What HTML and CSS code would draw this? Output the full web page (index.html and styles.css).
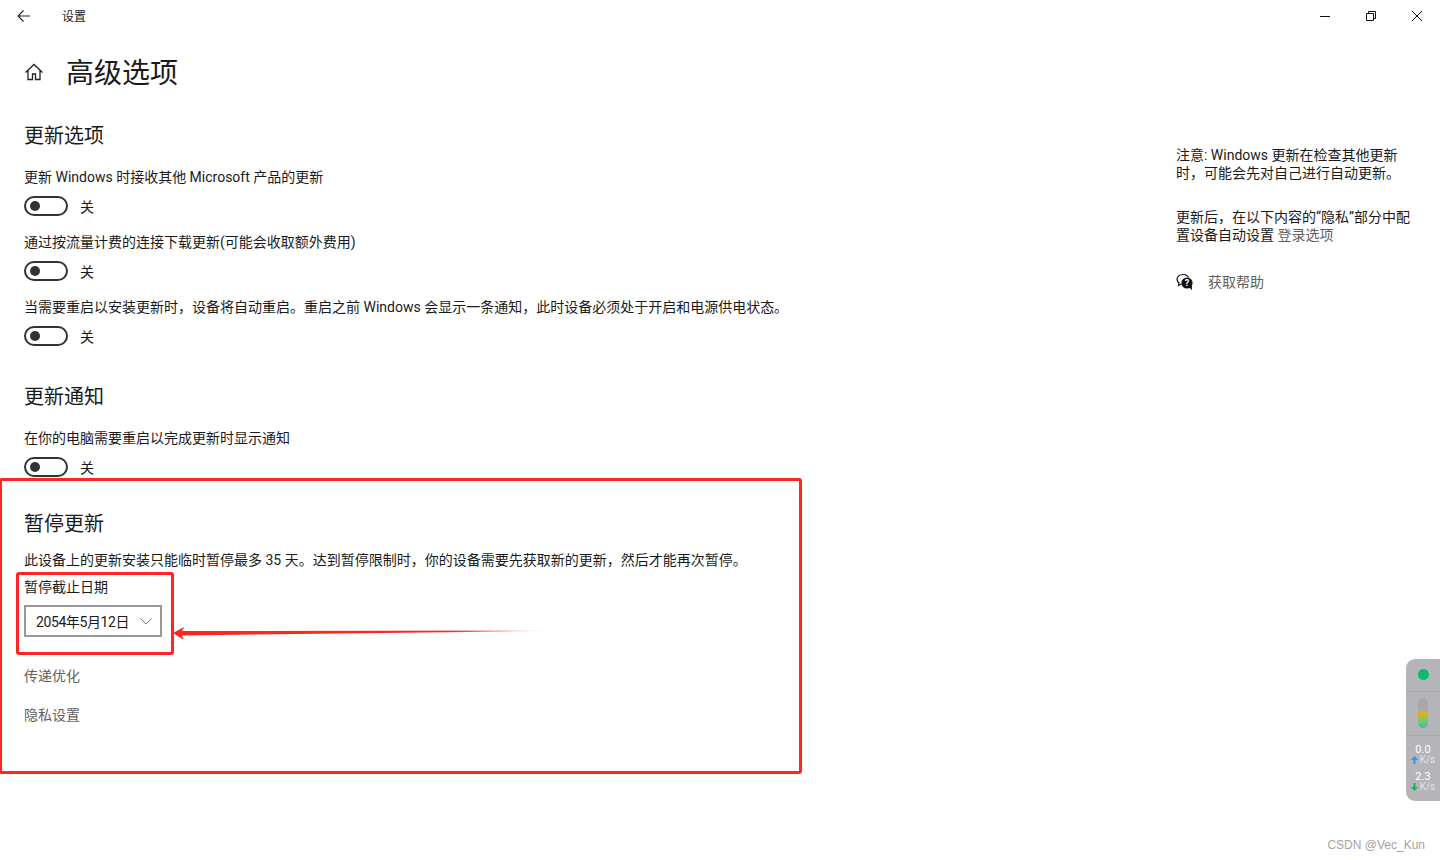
FILE: index.html
```html
<!DOCTYPE html>
<html lang="zh-CN">
<head>
    <meta charset="UTF-8">
    <meta name="viewport" content="width=device-width, initial-scale=1.0">
    <title>设置 - 高级选项</title>
    <link rel="stylesheet" href="styles.css">
</head>
<body>
    <!-- Title bar -->
    <header class="titlebar">
        <div class="titlebar-left">
            <svg class="back-icon" width="16" height="16" viewBox="0 0 16 16"><path d="M14 8H2.500M7.500 2.500 2 8l5.500 5.500" fill="none" stroke="#222" stroke-width="1.100"/></svg>
            <span class="titlebar-text">设置</span>
        </div>
        <div class="window-controls">
            <div class="window-btn"><svg width="12" height="12" viewBox="0 0 12 12"><path d="M1 6.500h10" stroke="#111" stroke-width="1"/></svg></div>
            <div class="window-btn"><svg width="12" height="12" viewBox="0 0 12 12"><path d="M1.500 3.500h7v7h-7zM3.500 3.500v-2h7v7h-2" fill="none" stroke="#111" stroke-width="1"/></svg></div>
            <div class="window-btn"><svg width="12" height="12" viewBox="0 0 12 12"><path d="M1 1l10 10M11 1 1 11" stroke="#111" stroke-width="1"/></svg></div>
        </div>
    </header>

    <div class="page">
        <main class="main-content">
            <div class="page-title">
                <svg width="20" height="20" viewBox="0 0 20 20"><path d="M1.500 10.500 10 2.500l8.500 8M4 8.500V17.500h4.500v-5.500h3v5.500H16V8.500" fill="none" stroke="#222" stroke-width="1.300"/></svg>
                <h1>高级选项</h1>
            </div>

            <!-- Update options -->
            <section class="options-section">
                <h2>更新选项</h2>
                <div class="option">
                    <p>更新 Windows 时接收其他 Microsoft 产品的更新</p>
                    <div class="toggle-row"><span class="toggle"></span><span>关</span></div>
                </div>
                <div class="option">
                    <p>通过按流量计费的连接下载更新(可能会收取额外费用)</p>
                    <div class="toggle-row"><span class="toggle"></span><span>关</span></div>
                </div>
                <div class="option">
                    <p>当需要重启以安装更新时，设备将自动重启。重启之前 Windows 会显示一条通知，此时设备必须处于开启和电源供电状态。</p>
                    <div class="toggle-row"><span class="toggle"></span><span>关</span></div>
                </div>
            </section>

            <!-- Update notifications -->
            <section class="options-section notify-section">
                <h2>更新通知</h2>
                <div class="option">
                    <p>在你的电脑需要重启以完成更新时显示通知</p>
                    <div class="toggle-row"><span class="toggle"></span><span>关</span></div>
                </div>
            </section>

            <!-- Pause updates -->
            <section class="options-section pause-section">
                <h2>暂停更新</h2>
                <p class="pause-desc">此设备上的更新安装只能临时暂停最多 35 天。达到暂停限制时，你的设备需要先获取新的更新，然后才能再次暂停。</p>
                <p class="date-label">暂停截止日期</p>
                <div class="date-select">
                    <span class="date-value">2054年5月12日</span>
                    <svg width="12" height="7" viewBox="0 0 12 7"><path d="M.5.5 6 6 11.500.5" fill="none" stroke="#777" stroke-width="1"/></svg>
                </div>
                <a class="plain-link first-link" href="#delivery">传递优化</a>
                <a class="plain-link" href="#privacy">隐私设置</a>
            </section>
        </main>

        <aside class="side-notes">
            <p>注意: Windows 更新在检查其他更新<br>时，可能会先对自己进行自动更新。</p>
            <p class="note-second">更新后，在以下内容的“隐私”部分中配<br>置设备自动设置 <a href="#login">登录选项</a></p>
            <div class="help-row">
                <svg width="18" height="18" viewBox="0 0 18 18">
                    <path d="M7 1.500C3.500 1.500 1 3.600 1 6.300c0 1.500.8 2.800 2 3.700L2.500 12.500 5.500 11" fill="none" stroke="#111" stroke-width="1.200"/>
                    <path d="M7 1.500c2.700 0 4.800 1.200 5.600 3" fill="none" stroke="#111" stroke-width="1.200"/>
                    <circle cx="11" cy="10" r="5.600" fill="#111"/>
                    <path d="M13 14l3 3.200-.2-5z" fill="#111"/>
                    <text class="help-mark" x="11" y="13">?</text>
                </svg>
                <span>获取帮助</span>
            </div>
        </aside>
    </div>

    <!-- Red annotations drawn over the screenshot -->
    <div class="mark mark-outer"></div>
    <div class="mark mark-inner"></div>
    <svg class="mark-arrow" width="372" height="14" viewBox="0 0 372 14">
        <defs>
            <linearGradient id="fade" x1="0" x2="1" y1="0" y2="0">
                <stop offset="0" stop-color="#fe2620"/>
                <stop offset="0.75" stop-color="#fe2620"/>
                <stop offset="1" stop-color="#fe2620" stop-opacity="0"/>
            </linearGradient>
        </defs>
        <path d="M0 8 11 2 9 6 372 5.500V6L9 10.500l2 4.500z" fill="url(#fade)"/>
    </svg>

    <!-- Network speed widget -->
    <div class="net-widget">
        <span class="net-dot"></span>
        <span class="net-line"></span>
        <span class="net-bar"><span class="net-bar-fill"></span></span>
        <span class="net-line"></span>
        <div class="net-speed">0.0</div>
        <div class="net-unit"><svg width="7" height="8" viewBox="0 0 7 8"><path d="M3.500 0 7 4H4.500v4h-2V4H0z" fill="#1e9bff"/></svg>K/s</div>
        <div class="net-speed net-speed-down">2.3</div>
        <div class="net-unit"><svg width="7" height="8" viewBox="0 0 7 8"><path d="M3.500 8 7 4H4.500V0h-2v4H0z" fill="#10b85a"/></svg>K/s</div>
    </div>

    <div class="watermark">CSDN @Vec_Kun</div>
</body>
</html>
```

FILE: styles.css
```css
* {
    margin: 0;
    padding: 0;
    box-sizing: border-box;
    font-family: Roboto, 'Noto Sans CJK SC', sans-serif;
}

:root {
    --text: #1a1a1a;
    --muted: #5f5f5f;
    --red: #fe2620;
}

html, body {
    height: 860px;
    overflow: hidden;
}

body {
    background-color: #ffffff;
    color: var(--text);
    font-size: 14px;
    position: relative;
}

/* Title bar */
.titlebar {
    display: flex;
    justify-content: space-between;
    height: 32px;
}

.titlebar-left {
    display: flex;
    align-items: center;
    padding-left: 16px;
}

.back-icon {
    margin-right: 30px;
}

.titlebar-text {
    font-size: 12px;
    margin-bottom: 2px;
}

.window-controls {
    display: flex;
}

.window-btn {
    width: 46px;
    height: 32px;
    display: flex;
    align-items: center;
    justify-content: center;
}

/* Layout */
.page {
    display: flex;
    justify-content: space-between;
}

.main-content {
    width: 820px;
    padding-left: 24px;
}

.page-title {
    display: flex;
    align-items: center;
    gap: 22px;
    height: 60px;
    margin-top: 10px;
}

.page-title h1 {
    font-size: 28px;
    font-weight: 400;
    line-height: 40px;
    margin-top: 4px;
}

/* Sections */
.options-section {
    margin-top: 20px;
}

.options-section h2 {
    font-size: 20px;
    font-weight: 400;
    line-height: 28px;
}

.option {
    margin-top: 16px;
}

.options-section h2 + .option {
    margin-top: 17px;
}

.option p,
.pause-desc,
.date-label {
    line-height: 20px;
    white-space: nowrap;
}

.toggle-row {
    display: flex;
    align-items: center;
    gap: 12px;
    height: 20px;
    margin-top: 9px;
}

.toggle {
    width: 44px;
    height: 20px;
    border: 2px solid #333333;
    border-radius: 10px;
    position: relative;
}

.toggle::after {
    content: "";
    position: absolute;
    left: 4px;
    top: 3px;
    width: 10px;
    height: 10px;
    border-radius: 50%;
    background-color: #333333;
}

.notify-section {
    margin-top: 37px;
}

.pause-section {
    margin-top: 33px;
}

.pause-desc {
    margin-top: 12px;
}

.date-label {
    margin-top: 7px;
}

.date-select {
    display: flex;
    align-items: center;
    justify-content: space-between;
    width: 138px;
    height: 32px;
    margin-top: 8px;
    padding: 0 8px 0 10px;
    border: 2px solid #999999;
}

.date-value {
    letter-spacing: -0.4px;
}

.plain-link {
    display: block;
    color: var(--muted);
    text-decoration: none;
    line-height: 20px;
    margin-top: 19px;
}

.first-link {
    margin-top: 29px;
}

/* Side notes */
.side-notes {
    width: 264px;
    padding-top: 114px;
    line-height: 18px;
}

.note-second {
    margin-top: 26px;
}

.side-notes a {
    color: var(--muted);
    text-decoration: none;
}

.help-row {
    display: flex;
    align-items: center;
    gap: 14px;
    margin-top: 29px;
    color: var(--muted);
}

.help-mark {
    fill: #ffffff;
    font-size: 9px;
    font-weight: 700;
    text-anchor: middle;
}

/* Annotations */
.mark {
    position: absolute;
    border: 3px solid var(--red);
    border-radius: 3px;
}

.mark-outer {
    left: -1px;
    top: 478px;
    width: 803px;
    height: 296px;
}

.mark-inner {
    left: 16px;
    top: 572px;
    width: 158px;
    height: 83px;
}

.mark-arrow {
    position: absolute;
    left: 173px;
    top: 625px;
}

/* Network widget */
.net-widget {
    position: absolute;
    left: 1406px;
    top: 659px;
    width: 34px;
    height: 142px;
    padding-top: 10px;
    display: flex;
    flex-direction: column;
    align-items: center;
    background-color: #b4b4b9;
    border-radius: 9px 0 0 9px;
    color: #ffffff;
    font-size: 10px;
}

.net-dot {
    width: 11px;
    height: 11px;
    border-radius: 50%;
    background-color: #0fb871;
}

.net-line {
    width: 100%;
    height: 1px;
    margin-top: 11px;
    background-color: #a8a8ad;
}

.net-bar {
    width: 10px;
    height: 30px;
    margin-top: 6px;
    border-radius: 5px;
    overflow: hidden;
    display: flex;
    align-items: flex-end;
    background-color: #a7a7ac;
}

.net-bar-fill {
    width: 100%;
    height: 17px;
    background: linear-gradient(#e3b01a 0, #e3b01a 15%, #86c765 50%, #38bfa6 100%);
}

.net-bar + .net-line {
    margin-top: 7px;
}

.net-speed {
    line-height: 11px;
    margin-top: 8px;
    font-size: 11px;
}

.net-speed-down {
    margin-top: 6px;
}

.net-unit {
    display: flex;
    align-items: center;
    gap: 2px;
    line-height: 10px;
    font-size: 10px;
    color: #e2e2e6;
}

.watermark {
    position: absolute;
    right: 15px;
    top: 837px;
    font-family: 'Liberation Sans', sans-serif;
    font-size: 12px;
    line-height: 16px;
    color: #a3a3a3;
}
```
